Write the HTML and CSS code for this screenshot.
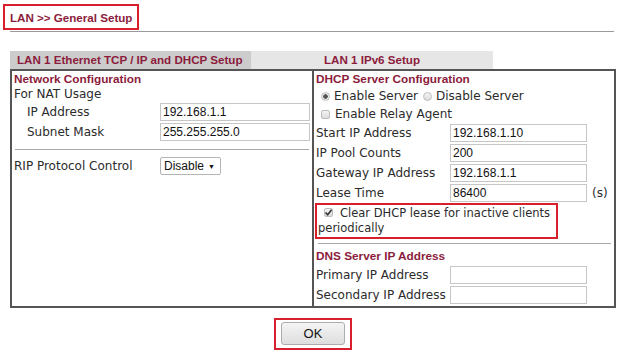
FILE: index.html
```html
<!DOCTYPE html>
<html lang="en">
<head>
    <meta charset="UTF-8">
    <meta name="viewport" content="width=device-width, initial-scale=1.0">
    <title>LAN General Setup</title>
    <link rel="stylesheet" href="styles.css">
</head>
<body>
    <div class="title-box"><h1 class="title">LAN &gt;&gt; General Setup</h1></div>
    <div class="title-line"></div>

    <div class="tabs">
        <div class="tab active">LAN 1 Ethernet TCP / IP and DHCP Setup</div>
        <div class="tab">LAN 1 IPv6 Setup</div>
    </div>

    <div class="panel">
        <div class="col left">
            <div class="heading">Network Configuration</div>
            <div class="line-row">For NAT Usage</div>
            <div class="row">
                <label class="label indent">IP Address</label>
                <input class="field wide" type="text" value="192.168.1.1">
            </div>
            <div class="row">
                <label class="label indent">Subnet Mask</label>
                <input class="field wide" type="text" value="255.255.255.0">
            </div>
            <div class="sep left-sep"></div>
            <div class="row">
                <label class="label">RIP Protocol Control</label>
                <span class="select">Disable <span class="arrow">&#9660;</span></span>
            </div>
        </div>

        <div class="col right">
            <div class="heading">DHCP Server Configuration</div>
            <div class="check-row">
                <span class="radio on"></span><span class="opt">Enable Server</span>
                <span class="radio"></span><span>Disable Server</span>
            </div>
            <div class="check-row">
                <span class="box"></span><span>Enable Relay Agent</span>
            </div>
            <div class="row">
                <label class="label rlabel">Start IP Address</label>
                <input class="field" type="text" value="192.168.1.10">
            </div>
            <div class="row">
                <label class="label rlabel">IP Pool Counts</label>
                <input class="field" type="text" value="200">
            </div>
            <div class="row">
                <label class="label rlabel">Gateway IP Address</label>
                <input class="field" type="text" value="192.168.1.1">
            </div>
            <div class="row">
                <label class="label rlabel">Lease Time</label>
                <input class="field" type="text" value="86400">
                <span class="unit">(s)</span>
            </div>
            <div class="mark clear-lease"><span class="box checked"><svg width="9" height="9" viewBox="0 0 9 9"><path d="M1.5 4.5 L3.7 6.8 L7.6 1.8" fill="none" stroke="#333" stroke-width="1.6"/></svg></span>Clear DHCP lease for inactive clients periodically</div>
            <div class="sep right-sep"></div>
            <div class="heading dns">DNS Server IP Address</div>
            <div class="row">
                <label class="label rlabel">Primary IP Address</label>
                <input class="field" type="text" value="">
            </div>
            <div class="row">
                <label class="label rlabel">Secondary IP Address</label>
                <input class="field" type="text" value="">
            </div>
        </div>
    </div>

    <div class="actions">
        <span class="mark ok-mark"><button class="ok">OK</button></span>
    </div>
</body>
</html>
```

FILE: styles.css
```css
body {
    margin: 0;
    font-family: "DejaVu Sans", Verdana, sans-serif;
    font-size: 12px;
    color: #2b2b2b;
    background: #fff;
}
.title-box {
    display: inline-block;
    margin: 4px 0 0 3px;
    padding: 0 5px;
    border: 2px solid #d7202b;
    height: 22px;
}
.title {
    margin: 0;
    font-family: "Liberation Sans", Arial, sans-serif;
    font-size: 11.6px;
    font-weight: bold;
    line-height: 23px;
    color: #8b1c3c;
}
.title-line {
    margin: 1px 10px 0 10px;
    border-top: 1px solid #9a9a9a;
}
.tabs {
    display: flex;
    margin: 19px 0 0 10px;
    height: 18px;
}
.tab {
    width: 242px;
    font-family: "Liberation Sans", Arial, sans-serif;
    font-size: 11.6px;
    font-weight: bold;
    line-height: 18px;
    color: #8b1c3c;
    background: #e6e6e6;
    text-align: center;
}
.tab.active {
    width: 241px;
    background: #cccccc;
    text-align: left;
    padding-left: 7px;
    box-sizing: border-box;
}
.panel {
    display: grid;
    grid-template-columns: 300px 302px;
    margin-left: 10px;
    width: 606px;
    height: 239px;
    box-sizing: border-box;
    border: 2px solid #555;
}
.col {
    padding: 0 2px;
}
.right {
    border-left: 2px solid #555;
}
.heading {
    height: 16px;
    line-height: 16px;
    font-family: "Liberation Sans", Arial, sans-serif;
    font-size: 11.8px;
    font-weight: bold;
    color: #8b1c3c;
}
.line-row {
    height: 15px;
    line-height: 15px;
}
.row {
    display: flex;
    align-items: center;
    height: 20px;
}
.label {
    width: 146px;
    flex: none;
}
.indent {
    box-sizing: border-box;
    padding-left: 13px;
}
.rlabel {
    width: 134px;
}
.field {
    height: 18px;
    box-sizing: border-box;
    margin: 0;
    padding: 0 2px;
    border: 1px solid #c6c6c6;
    font-family: "Liberation Sans", Arial, sans-serif;
    font-size: 12px;
    color: #111;
    width: 137px;
}
.field.wide {
    width: 150px;
}
.unit {
    margin-left: 5px;
}
.sep {
    border-top: 1px solid #a8a8a8;
}
.left-sep {
    margin: 7px 1px 6px 1px;
}
.right-sep {
    margin: 4px 1px 0 2px;
}
.select {
    display: inline-flex;
    align-items: center;
    justify-content: space-between;
    width: 61px;
    height: 18px;
    box-sizing: border-box;
    padding: 0 5px 0 3px;
    border: 1px solid #b5b5b5;
    border-radius: 2px;
    font-family: "Liberation Sans", Arial, sans-serif;
    font-size: 12px;
    color: #111;
}
.arrow {
    font-size: 7px;
}
.check-row {
    display: flex;
    align-items: center;
    height: 18px;
    padding-left: 5px;
}
.radio, .box {
    display: inline-block;
    width: 9px;
    height: 9px;
    box-sizing: border-box;
    border: 1px solid #bdbdbd;
    background: linear-gradient(#f4f4f4, #dcdcdc);
    margin-right: 5px;
    flex: none;
}
.radio {
    border-radius: 50%;
    margin-right: 4px;
}
.radio.on {
    background: radial-gradient(circle, #555 0 2px, #ececec 2.5px);
}
.opt {
    margin-right: 5px;
}
.box {
    border-radius: 2px;
    position: relative;
}
.box svg {
    position: absolute;
    left: -1px;
    top: -1px;
}
.mark {
    border: 2px solid #d7202b;
}
.clear-lease {
    width: 243px;
    box-sizing: border-box;
    margin: 0 0 0 -1px;
    padding: 1px 0 1px 1px;
    font-size: 11.5px;
    line-height: 15px;
}
.clear-lease .box {
    margin: 0 7px 0 6px;
}
.dns {
    height: 18px;
    padding-top: 3px;
    line-height: 18px;
}
.actions {
    display: flex;
    justify-content: center;
    width: 606px;
    margin: 10px 0 0 10px;
}
.ok-mark {
    display: inline-block;
    padding: 2px 5px 3px 5px;
}
.ok {
    display: block;
    width: 64px;
    height: 23px;
    margin: 0;
    border: 1px solid #acacac;
    border-radius: 3px;
    background: linear-gradient(#f4f4f4, #dedede);
    font-family: "Liberation Sans", Arial, sans-serif;
    font-size: 13px;
    color: #111;
}
```
